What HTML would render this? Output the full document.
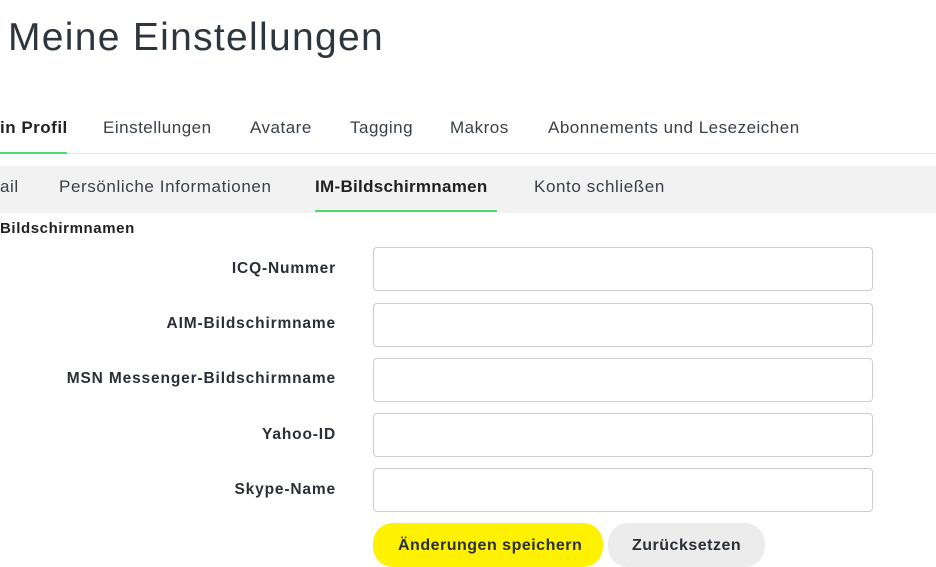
<!DOCTYPE html>
<html><head><meta charset="utf-8"><style>
body{margin:0;width:936px;height:543px;overflow:hidden;background:#fff;font-family:"Liberation Sans",sans-serif;color:#2a2f36;position:relative}
.a{position:absolute;white-space:nowrap}
h1{position:absolute;left:8px;top:16px;margin:0;font-weight:normal;font-size:39px;color:#2f353c;letter-spacing:1.3px}
.t{font-size:17px;color:#3a4048;top:118px;letter-spacing:0.5px}
.s{font-size:17px;color:#3a4048;top:177px;letter-spacing:0.6px}
.lab{font-size:15.5px;font-weight:bold;right:600px;text-align:right;letter-spacing:0.85px}
.in{position:absolute;left:373px;width:498px;height:42px;border:1px solid #ccc;border-radius:4px;background:#fff}
</style></head><body>
<h1>Meine Einstellungen</h1>
<div class="a t" style="left:0;font-weight:bold;color:#222">in Profil</div>
<div class="a t" style="left:103px">Einstellungen</div>
<div class="a t" style="left:250px">Avatare</div>
<div class="a t" style="left:350px">Tagging</div>
<div class="a t" style="left:450px">Makros</div>
<div class="a t" style="left:548px">Abonnements und Lesezeichen</div>
<div class="a" style="left:0;top:153px;width:936px;height:1px;background:#e6e6e6"></div>
<div class="a" style="left:0;top:152px;width:67px;height:2px;background:#4ddc72"></div>
<div class="a" style="left:0;top:166px;width:936px;height:47px;background:#f2f2f2"></div>
<div class="a s" style="left:0">ail</div>
<div class="a s" style="left:59px">Persönliche Informationen</div>
<div class="a s" style="left:315px;font-weight:bold;color:#222;letter-spacing:0.3px">IM-Bildschirmnamen</div>
<div class="a s" style="left:534px">Konto schließen</div>
<div class="a" style="left:315px;top:210px;width:182px;height:2px;background:#4ddc72"></div>
<div class="a" style="left:0;top:220px;font-size:15px;font-weight:bold;color:#222;letter-spacing:0.6px">Bildschirmnamen</div>
<div class="a lab" style="top:260px">ICQ-Nummer</div>
<div class="a lab" style="top:315px">AIM-Bildschirmname</div>
<div class="a lab" style="top:370px">MSN Messenger-Bildschirmname</div>
<div class="a lab" style="top:426px">Yahoo-ID</div>
<div class="a lab" style="top:481px">Skype-Name</div>
<div class="in" style="top:247px"></div>
<div class="in" style="top:303px"></div>
<div class="in" style="top:358px"></div>
<div class="in" style="top:413px"></div>
<div class="in" style="top:468px"></div>
<div class="a" style="left:373px;top:523px;width:230px;height:44px;border-radius:20px;background:#fff200"></div>
<div class="a" style="left:608px;top:523px;width:157px;height:44px;border-radius:20px;background:#ececec"></div>
<div class="a" style="left:398px;top:537px;font-size:16px;font-weight:bold;letter-spacing:0.5px">Änderungen speichern</div>
<div class="a" style="left:632px;top:537px;font-size:16px;font-weight:bold;letter-spacing:0.5px">Zurücksetzen</div>
</body></html>
